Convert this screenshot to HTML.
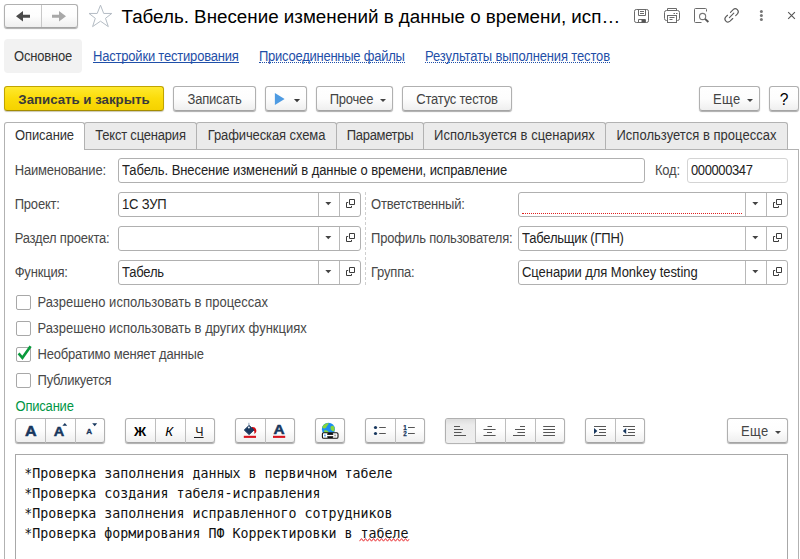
<!DOCTYPE html>
<html lang="ru"><head><meta charset="utf-8">
<title>Табель</title>
<style>
*{box-sizing:border-box;margin:0;padding:0}
html,body{width:800px;height:559px;overflow:hidden;background:#fff}
body{font-family:"Liberation Sans",Arial,sans-serif;font-size:13px;letter-spacing:-0.2px;color:#333;position:relative}
.abs{position:absolute}
.t{position:absolute;white-space:nowrap;line-height:16px;height:16px;transform:scaleY(1.075);transform-origin:0 12.5px}
.btn{position:absolute;height:25px;border:1px solid #b0b0b0;border-radius:3px;background:linear-gradient(#ffffff 0%,#fdfdfd 50%,#efefef 100%);border-bottom-color:#a4a4a4;box-shadow:0 1px 1px rgba(0,0,0,.33);text-align:center;line-height:25px;color:#444;white-space:nowrap}
.caret{display:inline-block;width:0;height:0;border-left:3px solid transparent;border-right:3px solid transparent;border-top:3px solid #444;vertical-align:middle;margin-left:6px;position:relative;top:0px}
.link{position:absolute;color:#1f4fa8;white-space:nowrap;border-bottom:1px solid #1f4fa8;height:14px;line-height:16px}
.link.dot{border-bottom:1px dotted #1f4fa8}
.tab{position:absolute;top:122px;height:27px;border:1px solid #b2b2b2;border-bottom:none;background:#ebebeb;line-height:25px;text-align:center;color:#333;white-space:nowrap;border-radius:3px 3px 0 0}
.tab.act{background:#fff;height:28px;z-index:2}
.inp{position:absolute;height:25px;border:1px solid #b0b0b0;border-radius:3px;background:#fff;line-height:23px;padding-left:3px;color:#222;white-space:nowrap;overflow:hidden}
.dv{position:absolute;top:0;width:1px;height:23px;background:#b8b8b8}
.s{display:inline-block;line-height:16px;transform:scaleY(1.075);transform-origin:50% 12.5px}
.cb{position:absolute;left:16px;width:15px;height:15px;border:1px solid #a8a8a8;border-radius:2px;background:#fff}
.lbl{position:absolute;line-height:16px;color:#484848;white-space:nowrap;transform:scaleY(1.075);transform-origin:0 12.5px}
.mono{position:absolute;left:24.3px;font-family:"DejaVu Sans Mono","Liberation Mono",monospace;font-size:13.3px;letter-spacing:0;line-height:20px;color:#111;white-space:pre}
</style></head><body>

<!-- nav buttons -->
<div class="btn" style="left:4px;top:4px;width:74px;height:24px"></div>
<div class="abs" style="left:41px;top:5px;width:1px;height:22px;background:#c8c8c8"></div>
<svg class="abs" style="left:4px;top:4px" width="74" height="24" viewBox="0 0 74 24">
<path d="M12 12.3 L19 7 V10.8 H26 V13.8 H19 V17.6Z" fill="#4a4a4a"/>
<path d="M62 12.3 L55 7 V10.8 H48 V13.8 H55 V17.6Z" fill="#a8a8a8"/>
</svg>
<!-- star -->
<svg class="abs" style="left:87px;top:3px" width="26" height="26" viewBox="87 3 26 26"><path d="M100.5 5.2 L103.7 13.45 L111.8 13.45 L105.5 18.3 L108.3 26.6 L100.5 21.2 L92.6 26.6 L95.3 18.3 L89 13.45 L97.2 13.45Z" fill="#fff" stroke="#b4bcc4" stroke-width="1"/></svg>
<!-- title -->
<div class="abs" id="title" style="left:121.5px;top:5px;font-size:18.8px;letter-spacing:0;line-height:24px;color:#000;white-space:nowrap">Табель. Внесение изменений в данные о времени, исп…</div>

<!-- header icons -->
<svg class="abs" style="left:625px;top:0" width="175" height="32" viewBox="625 0 175 32" fill="none" stroke="#6a6a6a" stroke-width="1">
<!-- floppy -->
<rect x="634.5" y="9.5" width="14" height="13" rx="1.8"/>
<path d="M638.5 9.5 V15.5 H645.5 V9.5 M640 11.5 H644 M640 13.5 H644"/>
<path d="M638.5 22.5 V19.5 H645.5 V22.5"/>
<rect x="641.5" y="19.5" width="3.5" height="3" fill="#555" stroke="none"/>
<!-- printer -->
<rect x="664.5" y="10.5" width="15" height="10" rx="2"/>
<path d="M667.5 10.5 V8.5 H676.5 V10.5"/>
<rect x="667.5" y="15.5" width="9" height="7" fill="#fff"/>
<path d="M669.5 17.5 H674.5 M669.5 19.5 H672.5 M673.5 13.5 H675 M676 13.5 H677.5"/>
<!-- preview -->
<path d="M701.5 22.5 H695.5 Q694.5 22.5 694.5 21.5 V9.5 Q694.5 8.5 695.5 8.5 H705.5 Q706.5 8.5 706.5 9.5 V11.5"/>
<circle cx="702.6" cy="16.5" r="3.1" stroke-width="1.1" stroke="#777"/>
<path d="M705 18.9 L708.4 22" stroke-width="1.9" stroke="#555"/>
<!-- link -->
<g stroke="#5c5c5c" stroke-width="1.15" stroke-linecap="round">
<path d="M730.47 12.29 L733.16 9.6 A3 3 0 0 1 737.4 13.84 L735.7 15.54"/>
<path d="M732.73 18.51 L730.04 21.2 A3 3 0 0 1 725.8 16.96 L727.5 15.26"/>
<path d="M729.41 17.59 L733.79 13.21"/>
</g>
<!-- dots -->
<g fill="#777" stroke="none"><circle cx="761.4" cy="11.4" r="1.5"/><circle cx="761.4" cy="15.5" r="1.5"/><circle cx="761.4" cy="19.5" r="1.5"/></g>
<!-- close -->
<path d="M788.2 12.2 L794.9 18.9 M794.9 12.2 L788.2 18.9" stroke="#555" stroke-width="1.1"/>
</svg>

<!-- nav tabs -->
<div class="abs" style="left:4px;top:39px;width:78px;height:34px;background:#f2f2f2;border-radius:4px"></div>
<div class="t" id="osn" style="left:14px;top:49px;color:#333">Основное</div>
<div class="link" id="l1" style="left:93px;top:49px"><span class="s">Настройки тестирования</span></div>
<div class="link dot" id="l2" style="left:259px;top:49px;letter-spacing:-0.25px"><span class="s">Присоединенные файлы</span></div>
<div class="link dot" id="l3" style="left:425px;top:49px;letter-spacing:-0.14px"><span class="s">Результаты выполнения тестов</span></div>

<!-- command bar -->
<div class="btn" id="b1" style="left:4px;top:86px;width:160px;background:linear-gradient(#ffe92e,#fbdc0a 50%,#f5d200);border-color:#c0a400;border-bottom-color:#a48c00;box-shadow:0 1px 1px rgba(80,70,0,.3);font-weight:bold;font-size:13.25px;letter-spacing:0;color:#3a3a3a">Записать и закрыть</div>
<div class="btn" id="b2" style="left:173px;top:86px;width:83px"><span class="s">Записать</span></div>
<div class="btn" id="b3" style="left:265px;top:86px;width:42px"></div>
<svg class="abs" style="left:265px;top:86px" width="42" height="25" viewBox="265 86 42 25"><path d="M274.9 93 L284.6 99 L274.9 105Z" fill="#4e9be2"/><path d="M293.9 99 H300.1 L297 102.2Z" fill="#3a3a3a"/></svg>
<div class="btn" id="b4" style="left:316px;top:86px;width:77px;padding-left:6.5px"><span class="s">Прочее</span><span class="caret" style="margin-left:6.7px"></span></div>
<div class="btn" id="b5" style="left:402px;top:86px;width:110px"><span class="s">Статус тестов</span></div>
<div class="btn" id="b6" style="left:699px;top:86px;width:61px;padding-left:6.7px;letter-spacing:0.3px;color:#444"><span class="s">Еще</span><span class="caret" style="margin-left:6.2px"></span></div>
<div class="btn" id="b7" style="left:769px;top:86px;width:30px;font-size:15.6px;letter-spacing:0;color:#000;line-height:26px">?</div>

<!-- tab strip -->
<div class="abs" style="left:4px;top:149px;width:795px;height:420px;border:1px solid #b2b2b2;border-bottom:none;background:#fff"></div>
<div class="tab act" id="t1" style="left:4px;width:81px;letter-spacing:-0.1px"><span class="s">Описание</span></div>
<div class="tab" id="t2" style="left:84px;width:113px"><span class="s">Текст сценария</span></div>
<div class="tab" id="t3" style="left:196px;width:141px;letter-spacing:-0.1px"><span class="s">Графическая схема</span></div>
<div class="tab" id="t4" style="left:336px;width:88px;letter-spacing:-0.33px"><span class="s">Параметры</span></div>
<div class="tab" id="t5" style="left:423px;width:183px;letter-spacing:0.03px"><span class="s">Используется в сценариях</span></div>
<div class="tab" id="t6" style="left:605px;width:183px;letter-spacing:0.03px"><span class="s">Используется в процессах</span></div>

<!-- form rows -->
<div class="lbl" id="f1" style="left:14.7px;top:163px">Наименование:</div>
<div class="inp" id="i1" style="left:118px;top:158px;width:527px;letter-spacing:-0.08px"><span class="s">Табель. Внесение изменений в данные о времени, исправление</span></div>
<div class="lbl" id="f2" style="left:655px;top:163px">Код:</div>
<div class="inp" id="i2" style="left:687px;top:158px;width:101px;border-color:#d4d4d4;letter-spacing:-0.4px"><span class="s">000000347</span></div>

<div class="lbl" id="f3" style="left:14.7px;top:197px">Проект:</div>
<div class="inp combo" id="i3" style="left:118px;top:192px;width:243px"><span class="s">1С ЗУП</span></div>
<div class="lbl" id="f4" style="left:371px;top:197px">Ответственный:</div>
<div class="inp combo" id="i4" style="left:518px;top:192px;width:270px"></div>
<div class="abs" style="left:522px;top:213px;width:220px;height:0;border-top:1px dotted #e02020"></div>

<div class="lbl" id="f5" style="left:14.7px;top:231px">Раздел проекта:</div>
<div class="inp combo" id="i5" style="left:118px;top:226px;width:243px"></div>
<div class="lbl" id="f6" style="left:371px;top:231px">Профиль пользователя:</div>
<div class="inp combo" id="i6" style="left:518px;top:226px;width:270px"><span class="s">Табельщик (ГПН)</span></div>

<div class="lbl" id="f7" style="left:14.7px;top:265px">Функция:</div>
<div class="inp combo" id="i7" style="left:118px;top:260px;width:243px"><span class="s">Табель</span></div>
<div class="lbl" id="f8" style="left:371px;top:265px">Группа:</div>
<div class="inp combo" id="i8" style="left:518px;top:260px;width:270px;letter-spacing:-0.05px"><span class="s">Сценарии для Monkey testing</span></div>

<div class="abs" style="left:365px;top:192px;width:0;height:93px;border-left:1px dashed #cfcfcf"></div>

<!-- combo buttons overlay -->
<svg class="abs" style="left:0;top:150px" width="800" height="140" viewBox="0 150 800 140" fill="none">
<defs>
<g id="cbtn">
<path d="M0.5 1 V24 M21.5 1 V24" stroke="#b8b8b8" stroke-width="1"/>
<path d="M7.3 10 H13.3 L10.3 13.2Z" fill="#444"/>
<path d="M31.5 7.5 H36.5 V12.5 H31.5 Z M30.2 10.5 H28.5 V15.5 H33.5 V13.9" stroke="#3c3c3c" stroke-width="1"/>
</g>
</defs>
<use href="#cbtn" x="318" y="192"/><use href="#cbtn" x="318" y="226"/><use href="#cbtn" x="318" y="260"/>
<use href="#cbtn" x="745" y="192"/><use href="#cbtn" x="745" y="226"/><use href="#cbtn" x="745" y="260"/>
</svg>

<!-- checkboxes -->
<div class="cb" style="top:295px"></div><div class="lbl" id="c1" style="left:37.5px;top:295.4px;letter-spacing:0.02px">Разрешено использовать в процессах</div>
<div class="cb" style="top:321px"></div><div class="lbl" id="c2" style="left:37.5px;top:321.4px;letter-spacing:0.02px">Разрешено использовать в других функциях</div>
<div class="cb" style="top:347px"></div><div class="lbl" id="c3" style="left:37.5px;top:347.4px">Необратимо меняет данные</div>
<svg class="abs" style="left:16px;top:344px" width="18" height="18" viewBox="0 0 18 18"><path d="M2.6 9.4 L6.4 13.8 L14.6 2.2" fill="none" stroke="#0a9a3c" stroke-width="2.6" stroke-linejoin="miter"/></svg>
<div class="cb" style="top:373px"></div><div class="lbl" id="c4" style="left:37.5px;top:373.4px">Публикуется</div>

<div class="lbl" id="dl" style="left:15.5px;top:399px;color:#009646">Описание</div>

<!-- editor toolbar -->
<div class="btn" style="left:15px;top:418px;width:90px"></div>
<div class="btn" style="left:125px;top:418px;width:90px"></div>
<div class="btn" style="left:235px;top:418px;width:60px"></div>
<div class="btn" style="left:315px;top:418px;width:30px"></div>
<div class="btn" style="left:365px;top:418px;width:60px"></div>
<div class="btn" style="left:445px;top:418px;width:120px"></div>
<div class="abs" style="left:446px;top:419px;width:29px;height:24px;background:linear-gradient(#dcdcdc,#ececec 25%,#eeeeee);border-radius:2px 0 0 2px"></div>
<div class="btn" style="left:585px;top:418px;width:60px"></div>
<div class="btn" id="b8" style="left:727px;top:418px;width:61px;padding-left:6.7px;letter-spacing:0.3px;color:#444"><span class="s">Еще</span><span class="caret" style="margin-left:6.2px"></span></div>

<svg class="abs" style="left:0;top:412px" width="800" height="40" viewBox="0 412 800 40" fill="none" font-family="Liberation Sans, Arial, sans-serif">
<g stroke="#bdbdbd" stroke-width="1">
<path d="M45.5 419 V443 M75.5 419 V443 M155.5 419 V443 M185.5 419 V443 M265.5 419 V443 M395.5 419 V443 M475.5 419 V443 M505.5 419 V443 M535.5 419 V443 M615.5 419 V443"/>
</g>
<!-- A icons -->
<g fill="#17375e" stroke="#17375e" stroke-linejoin="round" font-weight="bold">
<text transform="translate(30.6 435.6) scale(1.12 1)" text-anchor="middle" font-size="14.4" stroke-width="0.55">A</text>
<text transform="translate(59 435.6) scale(1.1 1)" text-anchor="middle" font-size="13.2" stroke-width="0.5">A</text>
<text transform="translate(89 433.6) scale(1.1 1)" text-anchor="middle" font-size="7.4" stroke-width="0.3">A</text>
</g>
<path d="M62.4 425.8 L64.8 423 L67.2 425.8Z" fill="#17375e"/>
<path d="M92.2 423.2 H97.2 L94.7 426.2Z" fill="#17375e"/>
<!-- Ж К Ч -->
<text x="140" y="435.6" text-anchor="middle" font-size="13.4" font-weight="bold" fill="#000">Ж</text>
<text x="169.2" y="435.6" text-anchor="middle" font-size="13.4" font-style="italic" fill="#000">К</text>
<text x="199.2" y="435.6" text-anchor="middle" font-size="12.4" fill="#222">Ч</text>
<path d="M194 437.5 H203.6" stroke="#222" stroke-width="1"/>
<!-- bucket -->
<path d="M252 427 C255.6 426.6 257.2 430 255.9 432.6 L254.4 434 L254.3 431 L252 430 Z" fill="#cf0a12"/>
<path d="M249.1 425.4 L253.9 430 L249.1 434.6 L244.3 430Z" fill="#17375e" stroke="#17375e" stroke-width="1" stroke-linejoin="round"/>
<path d="M248.9 422.8 V425.2" stroke="#8fa2b8" stroke-width="1"/>
<circle cx="248.9" cy="427.6" r="1" fill="#e8eef4"/>
<rect x="243.8" y="435.8" width="12.2" height="2.1" fill="#d8141e"/>
<!-- A underline -->
<text transform="translate(278.95 434.25) scale(1.2 1)" text-anchor="middle" font-size="12.8" font-weight="bold" fill="#17375e" stroke="#17375e" stroke-width="0.5" stroke-linejoin="round">A</text>
<rect x="273" y="435.8" width="12.2" height="2.1" fill="#d8141e"/>
<!-- globe -->
<circle cx="328.4" cy="429.2" r="6.5" fill="#1a8cf2"/>
<path d="M323.4 425.2 Q325.8 423 328.8 423 Q328.4 425 326.8 426.2 Q326.6 428 324.6 428.6 Q323 428.4 322.2 427.6 Q322.6 426.2 323.4 425.2Z M330.8 426.4 Q332.6 424.8 334 426.6 Q335.2 429 334.2 431.6 Q332 431.4 330.8 429.4 Q330.2 427.6 330.8 426.4Z M324 430.6 Q326.4 429.6 328.4 431.6 L329 433.4 L324.6 433.4Z" fill="#86d63a"/>
<rect x="322.4" y="432.7" width="15.6" height="5.6" rx="1.4" fill="#fff" stroke="#111" stroke-width="1.1"/>
<rect x="327.2" y="433" width="6" height="5" rx="1" fill="#111"/>
<rect x="326.2" y="434.9" width="8" height="1.3" fill="#fff"/>
<rect x="324" y="434.6" width="1.9" height="1.8" fill="#6aaef0"/>
<rect x="334.2" y="434.6" width="2" height="1.8" fill="#aaa"/>
<!-- lists -->
<circle cx="375.5" cy="427.5" r="1.6" fill="#17375e"/><circle cx="375.5" cy="433.5" r="1.6" fill="#17375e"/>
<path d="M379.2 427.5 H385.8 M379.2 433.5 H385.8 M408 427.5 H414.8 M408 433.5 H414.8" stroke="#555" stroke-width="1"/>
<text x="404.9" y="429.6" text-anchor="middle" font-size="6.3" font-weight="bold" fill="#17375e" stroke="#17375e" stroke-width="0.25">1</text>
<text x="404.9" y="435.8" text-anchor="middle" font-size="6.3" font-weight="bold" fill="#17375e" stroke="#17375e" stroke-width="0.25">2</text>
<!-- align -->
<g stroke="#555" stroke-width="1">
<path d="M454 426.5 H460 M454 429.5 H463 M454 432.5 H461.5 M454 435.5 H466"/>
<path d="M487.5 426.5 H492 M483.5 429.5 H495.6 M487 432.5 H492 M483.5 435.5 H495.6"/>
<path d="M520 426.5 H525 M515 429.5 H525 M517.4 432.5 H525 M513 435.5 H525"/>
<path d="M543.2 426.5 H555 M543.2 429.5 H555 M543.2 432.5 H555 M543.2 435.5 H555"/>
<path d="M594 426.5 H606 M599 429.5 H606 M599 432.5 H606 M594 435.5 H606"/>
<path d="M623 426.5 H635 M628 429.5 H635 M628 432.5 H635 M623 435.5 H635"/>
</g>
<path d="M594 428 L597.4 431 L594 434Z" fill="#17375e"/>
<path d="M626.2 428 L622.8 431 L626.2 434Z" fill="#17375e"/>
</svg>

<!-- text area -->
<div class="abs" style="left:15px;top:454px;width:773px;height:120px;border:1px solid #a8a8a8;background:#fff"></div>
<div class="mono" id="m1" style="top:464px">*Проверка заполнения данных в первичном табеле</div>
<div class="mono" id="m2" style="top:484px">*Проверка создания табеля-исправления</div>
<div class="mono" id="m3" style="top:504px">*Проверка заполнения исправленного сотрудников</div>
<div class="mono" id="m4" style="top:524px">*Проверка формирования ПФ Корректировки в табеле</div>
<svg class="abs" style="left:358.6px;top:537px" width="52" height="6" viewBox="0 0 52 6"><path d="M0.5 4.2 l2 -2.6 l2 2.6 l2 -2.6 l2 2.6 l2 -2.6 l2 2.6 l2 -2.6 l2 2.6 l2 -2.6 l2 2.6 l2 -2.6 l2 2.6 l2 -2.6 l2 2.6 l2 -2.6 l2 2.6 l2 -2.6 l2 2.6 l2 -2.6 l2 2.6 l2 -2.6 l2 2.6 l2 -2.6 l2 2.6 l1.6 -2" fill="none" stroke="#e8262a" stroke-width="0.95"/></svg>

</body></html>
